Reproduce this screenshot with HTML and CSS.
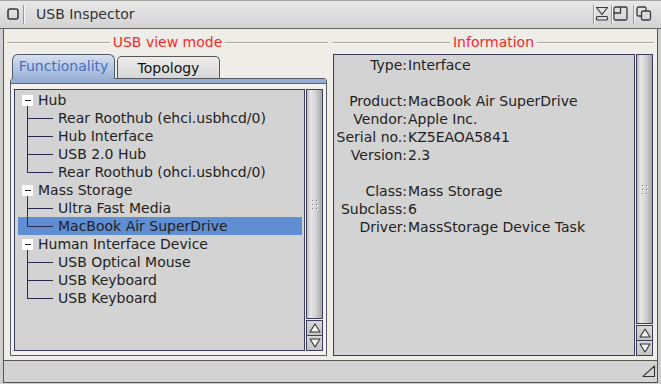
FILE: index.html
```html
<!DOCTYPE html>
<html>
<head>
<meta charset="utf-8">
<title>USB Inspector</title>
<link rel="stylesheet" href="styles.css">
</head>
<body>
<div class="window">
  <div class="titlebar">
    <div class="gad gad-close">
      <svg width="12" height="12" viewBox="0 0 12 12"><rect x="1" y="1" width="10" height="10" rx="2" fill="none" stroke="#3a3a3a" stroke-width="1.6"/></svg>
    </div>
    <div class="sep"></div>
    <div class="title">USB Inspector</div>
    <div class="spacer"></div>
    <div class="sep"></div>
    <div class="gad gad-iconify">
      <svg width="14" height="15" viewBox="0 0 14 15"><path d="M1.5 1.5 H12.5 L7 8.5 Z" fill="none" stroke="#3a3a3a" stroke-width="1.2" stroke-linejoin="round"/><rect x="1.5" y="10.5" width="11" height="3.5" rx="1" fill="none" stroke="#3a3a3a" stroke-width="1.2"/></svg>
    </div>
    <div class="sep"></div>
    <div class="gad gad-zoom">
      <svg width="15" height="15" viewBox="0 0 15 15"><rect x="1" y="1" width="13" height="13" rx="1.5" fill="none" stroke="#3a3a3a" stroke-width="1.3"/><path d="M7.5 1 V7 H1" fill="none" stroke="#3a3a3a" stroke-width="1.3"/></svg>
    </div>
    <div class="sep"></div>
    <div class="gad gad-depth">
      <svg width="16" height="15" viewBox="0 0 16 15"><rect x="1" y="1" width="9" height="9" rx="1.5" fill="none" stroke="#3a3a3a" stroke-width="1.3"/><rect x="5.5" y="5" width="9" height="9" rx="1.5" fill="#d9d9d9" stroke="#3a3a3a" stroke-width="1.3"/></svg>
    </div>
  </div>

  <div class="frame">
    <div class="client">
      <section class="group">
        <div class="gtitle"><span class="gline"></span><span class="glabel">USB view mode</span><span class="gline"></span></div>
        <div class="tabs">
          <div class="tab tab-active">Functionality</div>
          <div class="tab">Topology</div>
        </div>
        <div class="panel">
          <div class="band"></div>
          <div class="panel-body">
            <div class="list tree">
              <div class="row parent"><span class="exp"></span><span class="txt">Hub</span></div>
              <div class="row child">Rear Roothub (ehci.usbhcd/0)</div>
              <div class="row child">Hub Interface</div>
              <div class="row child">USB 2.0 Hub</div>
              <div class="row child last">Rear Roothub (ohci.usbhcd/0)</div>
              <div class="row parent"><span class="exp"></span><span class="txt">Mass Storage</span></div>
              <div class="row child">Ultra Fast Media</div>
              <div class="row child last selected">MacBook Air SuperDrive</div>
              <div class="row parent"><span class="exp"></span><span class="txt">Human Interface Device</span></div>
              <div class="row child">USB Optical Mouse</div>
              <div class="row child">USB Keyboard</div>
              <div class="row child last">USB Keyboard</div>
            </div>
            <div class="scroll">
              <div class="knob">
                <svg width="7" height="11" viewBox="0 0 7 11"><g fill="#fff"><rect x="2" y="2" width="1" height="1"/><rect x="6" y="2" width="1" height="1"/><rect x="2" y="6" width="1" height="1"/><rect x="6" y="6" width="1" height="1"/><rect x="2" y="10" width="1" height="1"/><rect x="6" y="10" width="1" height="1"/></g><g fill="#7a7a7a"><rect x="1" y="1" width="1" height="1"/><rect x="5" y="1" width="1" height="1"/><rect x="1" y="5" width="1" height="1"/><rect x="5" y="5" width="1" height="1"/><rect x="1" y="9" width="1" height="1"/><rect x="5" y="9" width="1" height="1"/></g></svg>
              </div>
              <div class="arrow arrow-up"><svg width="12" height="10" viewBox="0 0 12 10"><path d="M6 1 L11 9 H1 Z" fill="#f2f2f2" stroke="#333" stroke-width="1.1" stroke-linejoin="round"/></svg></div>
              <div class="arrow arrow-down"><svg width="12" height="10" viewBox="0 0 12 10"><path d="M6 9 L11 1 H1 Z" fill="#f2f2f2" stroke="#333" stroke-width="1.1" stroke-linejoin="round"/></svg></div>
            </div>
          </div>
        </div>
      </section>

      <section class="group">
        <div class="gtitle"><span class="gline"></span><span class="glabel">Information</span><span class="gline"></span></div>
        <div class="listwrap">
          <div class="list info">
            <div class="irow"><span class="k">Type:</span><span class="v">Interface</span></div>
            <div class="irow"></div>
            <div class="irow"><span class="k">Product:</span><span class="v">MacBook Air SuperDrive</span></div>
            <div class="irow"><span class="k">Vendor:</span><span class="v">Apple Inc.</span></div>
            <div class="irow"><span class="k">Serial no.:</span><span class="v">KZ5EAOA5841</span></div>
            <div class="irow"><span class="k">Version:</span><span class="v">2.3</span></div>
            <div class="irow"></div>
            <div class="irow"><span class="k">Class:</span><span class="v">Mass Storage</span></div>
            <div class="irow"><span class="k">Subclass:</span><span class="v">6</span></div>
            <div class="irow"><span class="k">Driver:</span><span class="v">MassStorage Device Task</span></div>
          </div>
          <div class="scroll">
            <div class="knob">
              <svg width="7" height="11" viewBox="0 0 7 11"><g fill="#fff"><rect x="2" y="2" width="1" height="1"/><rect x="6" y="2" width="1" height="1"/><rect x="2" y="6" width="1" height="1"/><rect x="6" y="6" width="1" height="1"/><rect x="2" y="10" width="1" height="1"/><rect x="6" y="10" width="1" height="1"/></g><g fill="#7a7a7a"><rect x="1" y="1" width="1" height="1"/><rect x="5" y="1" width="1" height="1"/><rect x="1" y="5" width="1" height="1"/><rect x="5" y="5" width="1" height="1"/><rect x="1" y="9" width="1" height="1"/><rect x="5" y="9" width="1" height="1"/></g></svg>
            </div>
            <div class="arrow arrow-up"><svg width="12" height="10" viewBox="0 0 12 10"><path d="M6 1 L11 9 H1 Z" fill="#f2f2f2" stroke="#333" stroke-width="1.1" stroke-linejoin="round"/></svg></div>
            <div class="arrow arrow-down"><svg width="12" height="10" viewBox="0 0 12 10"><path d="M6 9 L11 1 H1 Z" fill="#f2f2f2" stroke="#333" stroke-width="1.1" stroke-linejoin="round"/></svg></div>
          </div>
        </div>
      </section>
    </div>
    <div class="status">
      <svg class="resize" width="14" height="13" viewBox="0 0 14 13"><path d="M12.5 1 V11.5 H1.5 Q0.8 11.5 1.4 10.8 Z" fill="none" stroke="#333" stroke-width="1.1" stroke-linejoin="round"/></svg>
    </div>
  </div>
</div>
</body>
</html>
```

FILE: styles.css
```css
html, body {
  margin: 0;
  padding: 0;
}
body {
  width: 661px;
  height: 384px;
  overflow: hidden;
  font-family: "DejaVu Sans", "Noto Sans", sans-serif;
  font-size: 14px;
  color: #222;
  background: #cdcdcd;
}
.window {
  height: 384px;
  display: flex;
  flex-direction: column;
  background: #cfcfcf;
}

/* title bar */
.titlebar {
  height: 28px;
  flex: none;
  display: flex;
  align-items: center;
  padding-left: 7px;
  border-bottom: 1px solid #666;
  background: linear-gradient(#e8e8e8, #d3d3d3);
  box-shadow: inset 0 1px 0 #a5a5a5;
}
.gad {
  height: 28px;
  display: flex;
  align-items: flex-start;
}
.gad svg { display: block; }
.gad-close svg { margin-top: 8px; }
.gad-iconify { width: 16px; }
.gad-iconify svg { margin-top: 6px; }
.gad-zoom { width: 20px; }
.gad-zoom svg { margin-top: 6px; }
.gad-depth { width: 18px; margin-right: 8px; }
.gad-depth svg { margin-top: 6px; margin-left: 1px; }
.sep {
  width: 1px;
  height: 19px;
  background: #9a9a9a;
  border-right: 1px solid #f4f4f4;
}
.gad-close + .sep { margin-left: 4px; }
.title {
  margin-left: 11px;
  color: #333;
  line-height: 18px;
}
.spacer { flex: 1; }

/* window frame */
.frame {
  flex: 1;
  display: flex;
  flex-direction: column;
  margin: 0 3px 1px;
  border: 1px solid #555;
  border-top: none;
}
.client {
  flex: 1;
  display: flex;
  gap: 5px;
  padding: 5px 3px 4px 3px;
  background: #efede8;
}
.group {
  width: 321px;
  display: flex;
  flex-direction: column;
}
.gtitle {
  height: 16px;
  display: flex;
  align-items: center;
  gap: 3px;
}
.gline {
  flex: 1;
  height: 0;
  margin-top: 1px;
  border-top: 1px solid #aaa69f;
  border-bottom: 1px solid #fbfaf8;
}
.glabel {
  color: #ff2626;
  line-height: 16px;
}

/* tabs */
.tabs {
  height: 24px;
  margin-top: 4px;
  padding-left: 5px;
  display: flex;
  align-items: flex-end;
  gap: 2px;
  position: relative;
  z-index: 1;
}
.tab {
  box-sizing: border-box;
  width: 103px;
  height: 22px;
  border: 1px solid #555;
  border-bottom: none;
  border-radius: 5px 5px 0 0;
  background: linear-gradient(#ededed, #d7d7d7);
  color: #111;
  text-align: center;
  line-height: 22px;
}
.tab-active {
  height: 25px;
  margin-bottom: -1px;
  border-color: #525a68;
  border-radius: 6px 6px 0 0;
  background: linear-gradient(#d4e0f1, #9cb2d7);
  color: #4670bd;
  line-height: 22px;
}
.panel {
  flex: 1;
  margin: 0 1px 0 3px;
  border: 1px solid #555b66;
  border-radius: 3px 3px 0 0;
  display: flex;
  flex-direction: column;
  background: #f3f2ef;
}
.band {
  height: 4px;
  background: #98aed4;
  border-bottom: 1px solid #56617a;
}
.panel-body {
  flex: 1;
  display: flex;
  gap: 1px;
  padding: 5px 3px 4px 3px;
}

/* lists */
.list {
  flex: 1;
  border: 1px solid #3c3c5e;
  background: #d3d3d3;
}
.tree {
  padding: 1px 2px 0 3px;
}
.row {
  height: 18px;
  line-height: 18px;
  display: flex;
  align-items: center;
  white-space: nowrap;
  background-repeat: no-repeat;
}
.parent {
  background-image: linear-gradient(#2b2b4f, #2b2b4f);
  background-size: 1px 3px;
  background-position: 9px 15px;
}
.exp {
  width: 11px;
  height: 11px;
  margin-left: 4px;
  background: linear-gradient(#1e1e1e, #1e1e1e) center / 6px 1px no-repeat, #fff;
}
.parent .txt { margin-left: 5px; }
.child {
  padding-left: 40px;
  background-image: linear-gradient(#2b2b4f, #2b2b4f), linear-gradient(#2b2b4f, #2b2b4f);
  background-size: 1px 18px, 26px 1px;
  background-position: 9px 0, 9px 9px;
}
.child.last {
  background-size: 1px 10px, 26px 1px;
}
.selected {
  background-color: #5f8ed3;
}

.listwrap {
  flex: 1;
  margin-top: 4px;
  margin-right: 1px;
  display: flex;
  gap: 1px;
}
.info {
  padding-top: 1px;
}
.irow {
  height: 18px;
  line-height: 18px;
  display: flex;
  white-space: nowrap;
}
.irow .k {
  width: 73px;
  margin-right: 1px;
  text-align: right;
}

/* scrollbars */
.scroll {
  width: 17px;
  display: flex;
  flex-direction: column;
}
.knob {
  flex: 1;
  margin-bottom: 1px;
  border: 1px solid #3c3c5e;
  background: linear-gradient(to right, #bdbdbd, #e6e6e6 25%, #d2d2d2 60%, #a6a6a6);
  display: flex;
  align-items: center;
  justify-content: center;
}
.knob svg { display: block; }
.arrow {
  border: 1px solid #3c3c5e;
  background: linear-gradient(#d8d8d8, #c4c4c4);
  display: flex;
  align-items: center;
  justify-content: center;
}
.arrow svg { display: block; }
.arrow-up { height: 14px; }
.arrow-down { height: 14px; border-top: none; }

/* status bar */
.status {
  height: 21px;
  flex: none;
  border-top: 1px solid #555;
  background: #d3d3d3;
  display: flex;
  justify-content: flex-end;
  align-items: center;
}
.resize {
  display: block;
  margin-right: 1px;
}
```
